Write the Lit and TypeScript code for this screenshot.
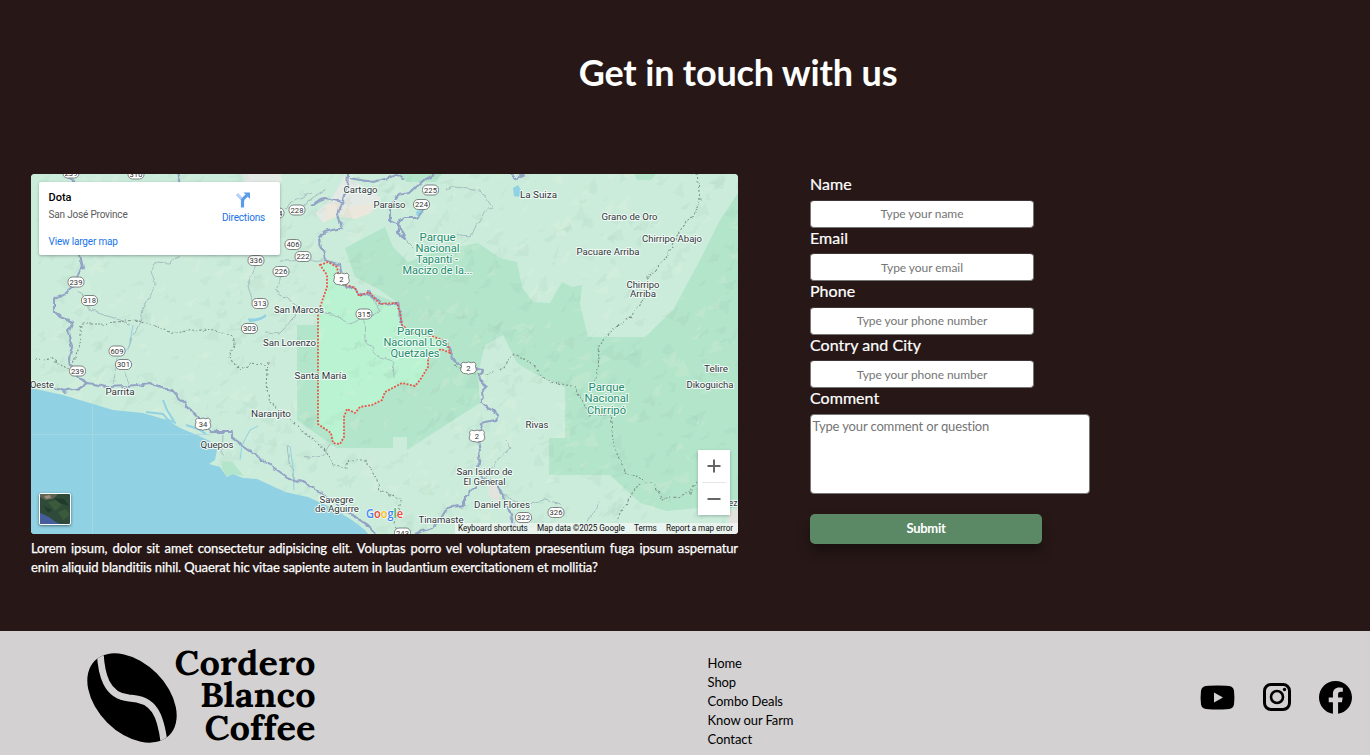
import { LitElement, html, svg, css } from "lit";
import { customElement } from "lit/decorators.js";

type Label = { x: number; y: number; w: number; t: string; park?: boolean };

const LABELS: Label[] = [
  { x: 360.5, y: 193, w: 34, t: "Cartago" },
  { x: 389.5, y: 207.5, w: 32, t: "Paraíso" },
  { x: 538.5, y: 197.5, w: 37, t: "La Suiza" },
  { x: 629.5, y: 220, w: 56, t: "Grano de Oro" },
  { x: 672, y: 241.5, w: 60, t: "Chirripo Abajo" },
  { x: 608, y: 254.5, w: 63, t: "Pacuare Arriba" },
  { x: 643, y: 287.5, w: 33, t: "Chirripo" },
  { x: 643, y: 297, w: 26, t: "Arriba" },
  { x: 299, y: 313, w: 50, t: "San Marcos" },
  { x: 289.5, y: 346, w: 53, t: "San Lorenzo" },
  { x: 320.5, y: 378.5, w: 52, t: "Santa María" },
  { x: 42, y: 388, w: 24, t: "Oeste" },
  { x: 120, y: 395, w: 29, t: "Parrita" },
  { x: 271, y: 417, w: 40, t: "Naranjito" },
  { x: 217, y: 448, w: 33, t: "Quepos" },
  { x: 537, y: 428, w: 23, t: "Rivas" },
  { x: 716, y: 372, w: 24, t: "Telire" },
  { x: 710, y: 388, w: 47, t: "Dikoguicha" },
  { x: 484.5, y: 475, w: 56, t: "San Isidro de" },
  { x: 484.5, y: 485, w: 42, t: "El General" },
  { x: 502, y: 508, w: 56, t: "Daniel Flores" },
  { x: 441, y: 522.5, w: 45, t: "Tinamaste" },
  { x: 336.5, y: 502.5, w: 34, t: "Savegre" },
  { x: 337, y: 512, w: 44, t: "de Aguirre" },
  { x: 733, y: 505.5, w: 9, t: "ez" },
  { x: 437.5, y: 240.5, w: 36, t: "Parque", park: true },
  { x: 437.5, y: 251.5, w: 44, t: "Nacional", park: true },
  { x: 437, y: 263, w: 42, t: "Tapantí -", park: true },
  { x: 437.5, y: 274, w: 70, t: "Macizo de la...", park: true },
  { x: 415, y: 335, w: 36, t: "Parque", park: true },
  { x: 415.5, y: 346, w: 64, t: "Nacional Los", park: true },
  { x: 415, y: 357, w: 49, t: "Quetzales", park: true },
  { x: 606.5, y: 391, w: 36, t: "Parque", park: true },
  { x: 606.5, y: 402, w: 44, t: "Nacional", park: true },
  { x: 606.5, y: 413.5, w: 39, t: "Chirripó", park: true },
];

const SHIELDS: [number, number, string][] = [
  [71, 173, "239"], [136, 174, "310"], [430.5, 190, "225"], [421.5, 204.5, "224"],
  [276, 213, "204"], [297, 210, "228"], [293, 244.5, "406"], [303, 256.5, "222"],
  [256, 260.5, "336"], [281, 271.5, "226"], [76, 282, "239"], [89.5, 300.5, "318"],
  [260, 303.5, "313"], [249.5, 328.5, "303"], [364, 314, "315"], [117, 351, "609"],
  [123.5, 364.5, "301"], [77.5, 371, "239"], [523.5, 517.5, "322"], [556, 512.5, "326"],
  [402.5, 533, "243"],
];

const US_SHIELDS: [number, number, string][] = [
  [341.5, 279, "2"], [468.5, 368, "2"], [477, 436, "2"], [203, 424, "34"],
];

const DOTA =
  "M320 265L328 262L337 267L340 283L355 288L359 296L369 292L380 304L397 303L400 313L402 325L412 333L432 336L447 342L450 353L441 349L428 358L428 367L420 380L415 386L402 383L385 392L382 400L372 405L360 407L355 413L347 409L344 417L344 437L340 444L333 443L331 433L318 424L318 313L327 287L327 275Z";

const PARKS =
  "M345 248L385 227L393 247L408 262L440 250L478 243L500 258L517 262L522 287L533 302L550 303L562 282L572 287L582 285L580 303L588 337L645 337L673 310L700 260L720 220L738 193V508H697L667 511L640 503L623 487L610 475H549V438H565V387L533 373L517 363L503 335L485 345L478 373L480 403L407 450V437H393V448H337L325 440L297 420V325H335V287L355 290L359 296L369 292L398 303L380 290L355 277Z";

const WATER =
  "M31 388L63 395L83 401L113 410L143 413L167 420L180 428L197 435L210 441L217 450L215 460L209 464L220 467L227 477L233 474L243 478L257 479L270 485L285 492L308 497L332 508L352 520L365 530L368 534H31Z";

const ROADS = [
  "M80 255L83 268L77 277L73 287L66 293L55 298L55 312L60 317L73 322L68 333L72 347L69 360L70 365L78 378L88 383L80 388L63 391L55 388",
  "M88 383L107 387L128 386L150 383L158 387L172 390L200 420L212 432H232V438L243 446L270 465L290 479L302 482L320 492L335 503L352 515L368 525L375 534",
  "M348 174L347 187L342 203L338 214L342 228L325 232L317 238L323 250L325 260L340 265L343 285L355 288L359 296L369 292L380 304L397 303L400 313L402 325L406 331",
  "M446 342L451 348L450 355L456 363L463 365L483 370L480 376L482 383L487 387L481 393L482 402L489 408L497 415L495 420L482 423L477 437L480 450L477 467L483 480L465 495L465 505L447 508L440 520L432 528L415 534",
  "M483 479L492 480L503 495L515 526",
  "M435 174L425 179L410 193L398 195L390 207V220L398 224L405 238L398 233L398 222L405 218L418 218L425 207",
  "M310 205L325 198L342 202M350 178L373 182L398 175L404 179",
  "M66 177L75 182M177 174L180 183M510 174L517 179L524 174",
];

const MINOR_ROADS =
  "M180 255L170 263L156 262L152 270L156 283L148 300L142 310L140 322L133 335L128 350M78 290L92 311L120 320L132 325M112 384L117 358M124 368L130 384M280 213L292 203L312 192M280 261L325 260M256 265L248 286L252 300M300 206L325 190M281 275L275 290L297 305L295 317L280 333L265 332M320 313L338 316L350 324L380 312L373 298M364 318L365 340L380 358L393 362L394 376M404 238L414 248M447 190L455 186L480 190L493 208L484 213L475 228L470 237L450 235M483 480L497 460L510 448L505 440M504 494L520 505L545 500L560 504M586 525L600 500M303 458L323 455L330 444M288 445L290 463L295 480M223 435L222 455";

const BORDERS =
  "M35 360L50 358L70 371L80 345L82 324L104 324L115 322L138 320L160 327L175 333L200 329L215 330L230 336L235 343L229 358L240 370L252 363L266 366M268 362L266 385L270 402L297 426L325 450L333 466L347 468L350 460L365 460L377 480L380 490L402 499L395 520L396 533M697 174L700 200L692 217L680 230L665 260L648 277L643 300L630 318L612 330L598 346L599 360L594 382M500 370L515 354L530 362L545 380L575 387L590 415L610 415L614 447L625 472L655 486L662 499L690 493L697 480M640 483L627 500L618 520M455 366L475 374L495 372";

/** Small translucent facets scattered over the land, shading it as relief. */
function relief() {
  let seed = 7;
  const rnd = () => {
    seed = (seed * 16807) % 2147483647;
    return seed / 2147483647;
  };
  const dark: string[] = [];
  const deep: string[] = [];
  const light: string[] = [];
  for (let i = 0; i < 1100; i++) {
    const x = 31 + rnd() * 707;
    const y = 174 + rnd() * 360;
    const s = 6 + rnd() * 14;
    const a = -1.1 + rnd() * 0.9;
    const b = a + 0.35 + rnd() * 0.8;
    const k = 0.3 + rnd() * 0.7;
    const d = `M${x.toFixed(1)} ${y.toFixed(1)}l${(s * Math.cos(a)).toFixed(1)} ${(s * Math.sin(a)).toFixed(1)}L${(x + s * k * Math.cos(b)).toFixed(1)} ${(y + s * k * Math.sin(b)).toFixed(1)}z`;
    (i % 3 === 0 ? light : i % 3 === 1 ? dark : deep).push(d);
  }
  return svg`
    <g filter="url(#rough)">
      <path d=${dark.join("")} fill="#548b70" opacity=".055"/>
      <path d=${deep.join("")} fill="#3f7a66" opacity=".045"/>
      <path d=${light.join("")} fill="#f3f4d9" opacity=".15"/>
    </g>`;
}

@customElement("dota-map")
export class DotaMap extends LitElement {
  static styles = css`
    :host { display: block; position: relative; height: 360px; border-radius: 4px; overflow: hidden;
      font-family: Roboto, sans-serif; background: #cbecdb; color: #111; }
    .canvas { display: block; width: 100%; height: 100%; }
    .card { position: absolute; left: 8px; top: 8px; width: 221px; height: 55px; padding: 9px 10px;
      background: #fff; border-radius: 2px; box-shadow: 0 1px 3px rgba(0,0,0,.3); box-sizing: content-box;
      display: flex; justify-content: space-between; font-size: 10px; line-height: 12px; letter-spacing: -.18px; }
    .place { display: flex; flex-direction: column; margin-left: -.5px; }
    .place b { font-size: 11px; line-height: 13px; font-weight: 500; color: #000; letter-spacing: 0; }
    .place span { color: #5b5b5b; margin-top: 5px; }
    .blue, .place .blue { color: #1a73e8; }
    .place .blue { margin-top: 15px; }
    .directions { display: flex; flex-direction: column; align-items: center; margin-right: 5px; padding-top: 1px; }
    .directions svg { display: block; margin-bottom: 4px; }
    .zoom { position: absolute; right: 8px; top: 276px; width: 32px; height: 65px; background: #fff;
      box-shadow: 0 1px 3px rgba(0,0,0,.25); }
    .zoom svg { display: block; }
    .satellite { position: absolute; left: 8px; top: 319px; width: 30px; height: 30px; border: 1px solid #fff;
      border-radius: 2px; box-shadow: 0 1px 3px rgba(0,0,0,.5); overflow: hidden; }
    .satellite svg { display: block; }
    .legal { position: absolute; right: 0; bottom: 0; height: 11px; display: flex; justify-content: space-between;
      box-sizing: border-box; width: 283px; padding: 0 5px 0 3px; background: rgba(245,247,246,.72);
      font-size: 8.200px; line-height: 11px; white-space: nowrap; color: #111; letter-spacing: -.07px; }
    .name { font-size: 9.6px; fill: #30363a; }
    .park { font-size: 11px; fill: #218c6b; }
    .name, .park { text-anchor: middle; paint-order: stroke; stroke: #f2fbf6; stroke-width: 2px; stroke-linejoin: round; }
    .num { font-size: 7.6px; text-anchor: middle; fill: #333; }
    .google { font-size: 13px; font-family: "Open Sans", sans-serif; font-weight: 600; paint-order: stroke; stroke: #fff; stroke-width: 1px; }
  `;

  render() {
    return html`
      <svg class="canvas" viewBox="31 174 707 360">
        <filter id="rough" filterUnits="userSpaceOnUse" x="31" y="174" width="707" height="360">
          <feTurbulence type="fractalNoise" baseFrequency=".12" numOctaves="2" seed="4" />
          <feDisplacementMap in="SourceGraphic" scale="6" xChannelSelector="R" yChannelSelector="G" />
        </filter>
        <rect x="31" y="174" width="707" height="360" fill="#cbecdb" />
        <path d=${PARKS} fill="#b3e5cb" />
        <path d="M400 174h42l-6 8h-30zM634 174h22l-5 6h-14z" fill="#b3e5cb" />
        <path d="M345 176l18 10 18 12-8 12-35 5-15 8-7-10 16-15zM241 174h40v8h-36z" fill="#e3e9e5" />
        <path d="M326 205l14-3-2 14-14 6zM345 207l30-4-4 10-16 6-14-2z" fill="#ebe7dc" />
        <path d="M728 514l10-7v27h-8zM488 482l10 4 3 18-12-8z" fill="#e2e3dc" />
        <path d=${DOTA} fill="#baf3d2" />
        ${relief()}
        <path d=${WATER} fill="#90d1e3" />
        <path d="M222 461l10 1 12 14-11-2-6 3-5-9z" fill="#b3e5cb" />
        <g fill="#90d1e3">
          <path d="M513 188l5-3 3 5-2 7-5-1zM248 318q10 2 18-4v3q-7 5-17 5zM416 212l8-5-2 7-5 2z" />
        </g>
        <g fill="none" stroke="#90d1e3" stroke-width="2">
          <path d="M146 412l17 2 5 6 8 3M163 400l4 10 7 11M186 425l12 4 8 5" />
          <path d="M240 460l2-15 8-15 8-4M290 446l3 22 1 22M133 325l-4 22-7 8" stroke-width="1" />
        </g>
        <path d="M92.500 403V534M31 434.500H209" stroke="#a6d8e2" stroke-width=".8" />
        <g filter="url(#rough)" fill="none" stroke-linejoin="round">
          <path d=${MINOR_ROADS} stroke="#a0b8bb" stroke-width=".9" />
          <path d=${BORDERS} stroke="#7d938b" stroke-width="1.100" stroke-dasharray="2 2" />
          ${ROADS.map((d) => svg`<path d=${d} stroke="#92a3c5" stroke-width="2.100"/>`)}
        </g>
        <path d=${DOTA} fill="none" stroke="#ea5345" stroke-width="1.800" stroke-dasharray="1.900 1.500" />
        ${SHIELDS.map(
          ([x, y, n]) => svg`
          <rect x=${x - 8} y=${y - 5} width="16" height="10" rx="4.500" fill="#fff" stroke="#6f7776" stroke-width=".9"/>
          <text class="num" x=${x} y=${y + 2.8}>${n}</text>`
        )}
        ${US_SHIELDS.map(
          ([x, y, n]) => svg`
          <path d="M${x - 5.5} ${y - 6}l2.700 .8 2.800-.8 2.800 .8 2.700-.8 2 2.200q-1.200 2 0 4t-1 4.200q-1.500 1.200-3.500 1.200t-3 .8q-1-.8-3-.8t-3.500-1.200q-2.200-2.200-1-4.200t0-4z" fill="#fff" stroke="#6f7776" stroke-width=".9"/>
          <text class="num" x=${x} y=${y + 3}>${n}</text>`
        )}
        ${LABELS.map(
          (l) => svg`<text class=${l.park ? "park" : "name"} x=${l.x} y=${l.y} textLength=${l.w} lengthAdjust="spacingAndGlyphs">${l.t}</text>`
        )}
        <text class="google" x="366" y="517.500" textLength="37" lengthAdjust="spacingAndGlyphs"><tspan fill="#4285f4">G</tspan><tspan fill="#ea4335">o</tspan><tspan fill="#fbbc04">o</tspan><tspan fill="#4285f4">g</tspan><tspan fill="#34a853">l</tspan><tspan fill="#ea4335">e</tspan></text>
      </svg>
      <div class="card">
        <div class="place">
          <b>Dota</b><span>San José Province</span><span class="blue">View larger map</span>
        </div>
        <div class="directions blue">
          <svg width="16" height="16" viewBox="0 0 16 16">
            <path d="M2 2l5.500 6" stroke="#b5d1f7" stroke-width="3.200" fill="none" />
            <path d="M7.500 15.500V9.500Q7.500 7 9.500 5.500L12 3.500" stroke="#5c9bea" stroke-width="3.200" fill="none" />
            <path d="M8.500 .5H15V7z" fill="#5c9bea" />
          </svg>
          <span>Directions</span>
        </div>
      </div>
      <div class="zoom">
        <svg width="32" height="65" viewBox="0 0 32 65">
          <path d="M9.500 16h13M16 9.500v13M9.500 49h13" stroke="#666" stroke-width="2" />
          <path d="M4 32.500h24" stroke="#e6e6e6" />
        </svg>
      </div>
      <div class="satellite">
        <svg width="30" height="30" viewBox="0 0 30 30">
          <rect width="30" height="30" fill="#2f4a38" />
          <path d="M0 0h18l-5 5-8 1-5-3z" fill="#5d6350" />
          <path d="M8 8l8-2 6 5-7 6zM18 18l8-3 4 6-7 5z" fill="#3b5a3c" />
          <path d="M14 4l10 1 5 7-9-3zM4 12l8 4-4 3z" fill="#203a2b" />
          <path d="M4 2l6-1 1 3-5 1z" fill="#9a8f7c" />
          <path d="M0 19q9 3 14 8l6 3H0z" fill="#465d9c" />
        </svg>
      </div>
      <div class="legal">
        <span>Keyboard shortcuts</span><span>Map data ©2025 Google</span><span>Terms</span><span>Report a map error</span>
      </div>
    `;
  }
}

@customElement("app-root")
export class AppRoot extends LitElement {
  static styles = css`
    :host { display: flex; flex-direction: column; height: 755px; overflow: hidden; background: #271817;
      font-family: Lato, sans-serif; color: #fff; }
    h1 { margin: 0; padding: 50px 0 0 106px; height: 124px; box-sizing: content-box; text-align: center;
      font-size: 36px; line-height: 44px; font-weight: 700; letter-spacing: -.16px; }
    .content { display: flex; height: 457px; padding-left: 31px; gap: 72px; align-items: flex-start; }
    .about { width: 707px; }
    .about p { margin: 5px 0 0; font-size: 13px; line-height: 19px; text-align: justify; letter-spacing: -.11px;
      -webkit-text-stroke: .25px #fff; font-variant-ligatures: none; }
    form { width: 280px; display: flex; flex-direction: column; align-items: flex-start; }
    label { font-size: 16px; line-height: 20px; height: 25.500px; letter-spacing: .05px; -webkit-text-stroke: .2px #fff; }
    .last { height: 26px; }
    input { box-sizing: border-box; width: 224px; height: 28px; margin: 0; padding: 1px 2px; background: #fff;
      border: 1px solid #767676; border-top-color: #3f3535; border-radius: 4px; text-align: center;
      font: 12px Lato, sans-serif; letter-spacing: -.05px; }
    input::placeholder, textarea::placeholder { color: #757575; opacity: 1; }
    textarea { box-sizing: border-box; display: block; width: 280px; height: 80px; padding: 2px 1.500px; margin: 0;
      border: 1px solid #767676; border-radius: 4px; resize: none; background: #fff; font: 13px/19px Lato, sans-serif;
      letter-spacing: -.14px; font-variant-ligatures: none; }
    button { width: 232px; height: 30px; margin: 20px 0 0; padding: 0 0 2px; border: 0; border-radius: 5px; background: #5c8965;
      color: #fff; font: 700 13px Lato, sans-serif; letter-spacing: -.25px; box-shadow: 0 8px 12px rgba(0,0,0,.35); }
    footer { flex: 1; display: flex; justify-content: space-between; background: #d3d1d2; color: #000;
      padding: 10px 18px 0 87px; }
    .logo { display: block; }
    .brand { font-family: Lora, "Liberation Serif", serif; font-weight: 700; font-size: 34px; }
    ul { list-style: none; margin: 13px 0 0 -16px; padding: 0; font-size: 13px; line-height: 19px; letter-spacing: -.1px; }
    .social { display: flex; gap: 27px; height: 40px; margin-top: 36px; align-items: center; }
    .social svg { display: block; }
  `;

  private fields: [string, string][] = [
    ["Name", "Type your name"],
    ["Email", "Type your email"],
    ["Phone", "Type your phone number"],
    ["Contry and City", "Type your phone number"],
  ];

  render() {
    return html`
      <h1>Get in touch with us</h1>
      <section class="content">
        <div class="about">
          <dota-map></dota-map>
          <p>Lorem ipsum, dolor sit amet consectetur adipisicing elit. Voluptas porro vel voluptatem praesentium fuga ipsum aspernatur enim aliquid blanditiis nihil. Quaerat hic vitae sapiente autem in laudantium exercitationem et mollitia?</p>
        </div>
        <form>
          ${this.fields.map(([l, p]) => html`<label>${l}</label><input placeholder=${p} />`)}
          <label class="last">Comment</label>
          <textarea placeholder="Type your comment or question"></textarea>
          <button type="button">Submit</button>
        </form>
      </section>
      <footer>
        <svg class="logo" width="230" height="112" viewBox="87 641 230 112">
          <clipPath id="bean"><ellipse cx="132" cy="698" rx="52.700" ry="34.900" transform="rotate(45 132 698)" /></clipPath>
          <g clip-path="url(#bean)">
            <rect x="87" y="650" width="92" height="96" fill="#000" />
            <path d="M100 650C101 674 106 696 129 698C154 699 161 714 164.500 746" fill="none" stroke="#d3d1d2" stroke-width="6.800" />
          </g>
          <g class="brand">
            <text x="174.500" y="674.500" textLength="141" lengthAdjust="spacingAndGlyphs">Cordero</text>
            <text x="200" y="707" textLength="115.500" lengthAdjust="spacingAndGlyphs">Blanco</text>
            <text x="204.500" y="739.500" textLength="111" lengthAdjust="spacingAndGlyphs">Coffee</text>
          </g>
        </svg>
        <ul>
          <li>Home</li><li>Shop</li><li>Combo Deals</li><li>Know our Farm</li><li>Contact</li>
        </ul>
        <div class="social">
          <svg width="35" height="25" viewBox="0 0 35 25">
            <path fill-rule="evenodd" d="M17.500 .5Q28 .5 31 1.500Q33.500 2.300 34 5.500Q34.800 12.500 34 19.500Q33.500 22.700 31 23.500Q28 24.500 17.500 24.500T4 23.500Q1.500 22.700 1 19.500Q.2 12.500 1 5.500Q1.500 2.300 4 1.500Q7 .5 17.500 .5zM14 7.500V17.500L23 12.500z" />
          </svg>
          <svg width="30" height="30" viewBox="0 0 30 30">
            <rect x="2.500" y="2.500" width="25" height="25" rx="6.500" fill="none" stroke="#000" stroke-width="3" />
            <circle cx="15" cy="15" r="6" fill="none" stroke="#000" stroke-width="2.600" />
            <circle cx="22.500" cy="7.500" r="1.700" />
          </svg>
          <svg width="33" height="33" viewBox="8 8 496 496">
            <path d="M504 256C504 119 393 8 256 8S8 119 8 256c0 123.780 90.690 226.380 209.250 245V327.690h-63V256h63v-54.640c0-62.150 37-96.480 93.670-96.480 27.140 0 55.520 4.840 55.520 4.840v61h-31.280c-30.800 0-40.410 19.120-40.410 38.730V256h68.780l-11 71.690h-57.780V501C413.310 482.380 504 379.780 504 256z" />
          </svg>
        </div>
      </footer>
    `;
  }
}
